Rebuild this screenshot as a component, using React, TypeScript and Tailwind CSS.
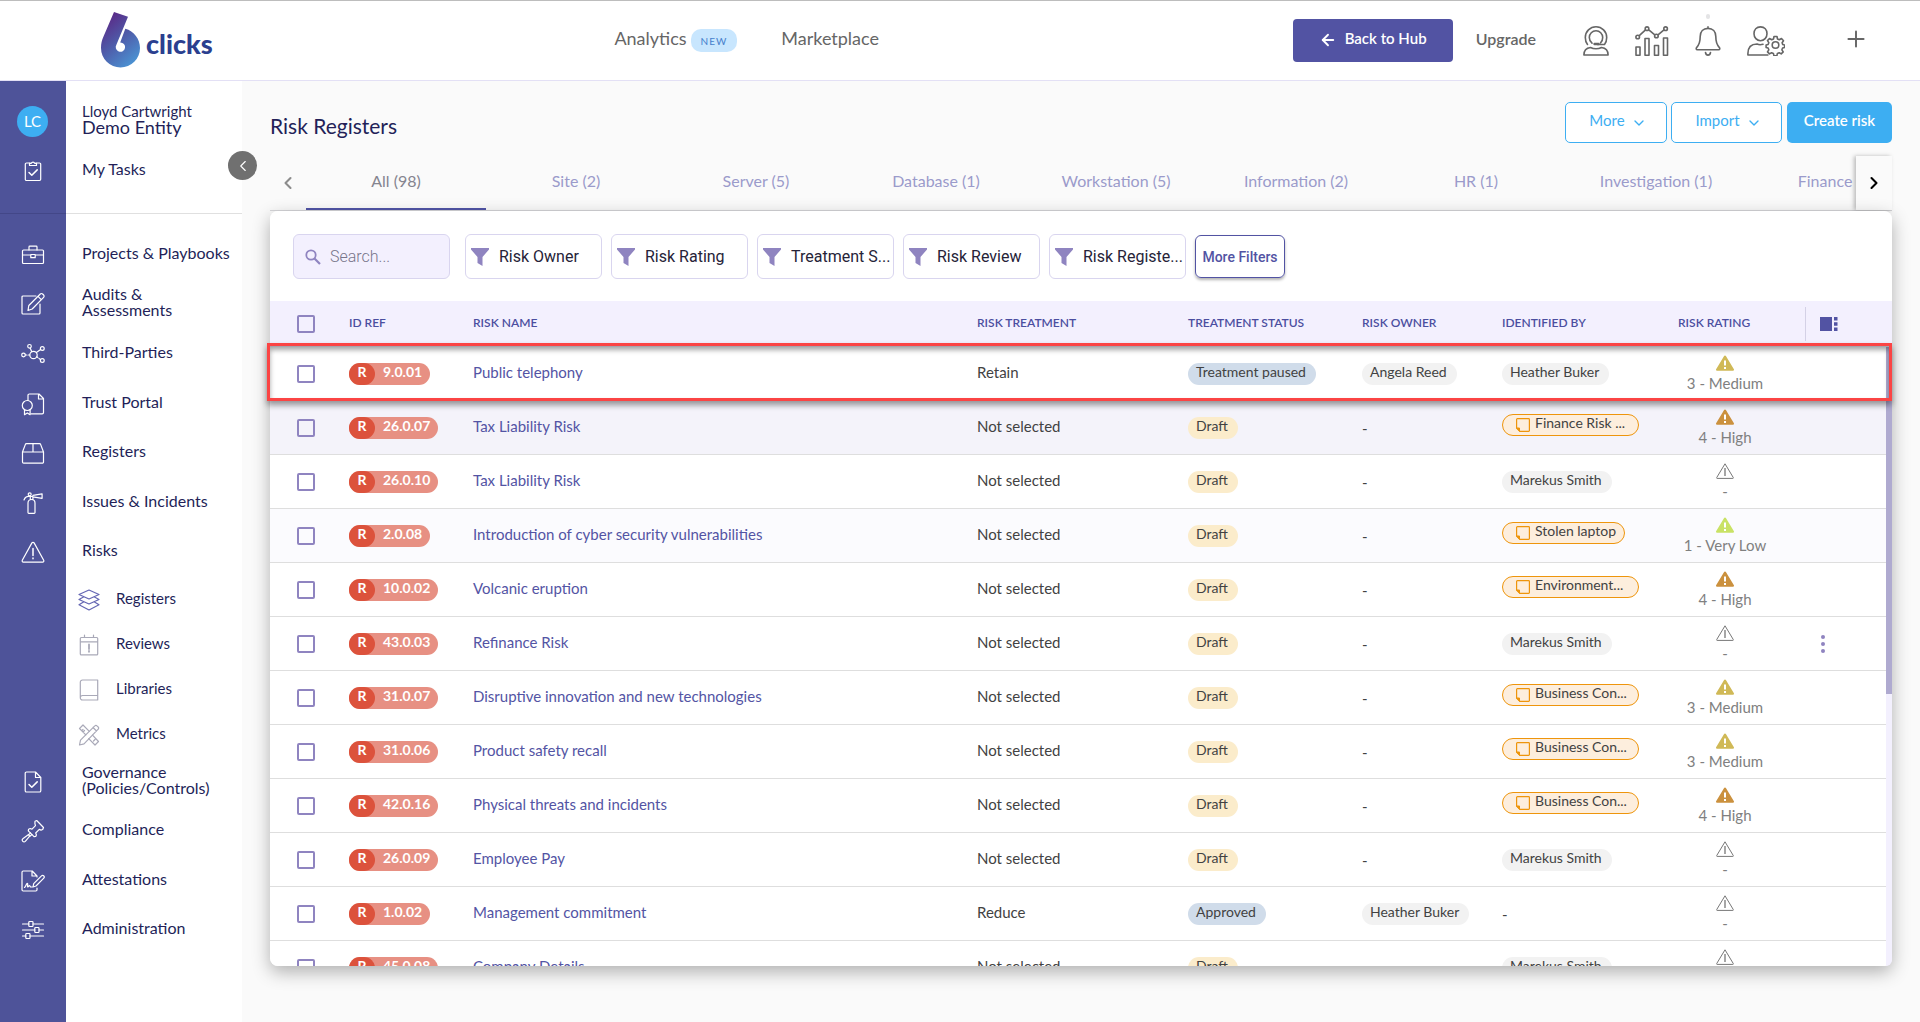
import React, { useState } from 'react';
import { ArrowLeft, ChevronDown, ChevronLeft, ChevronRight, Plus } from 'lucide-react';

type Rating = 'medium' | 'high' | 'low' | 'none';

interface Risk {
  id: string;
  name: string;
  treatment: string;
  status: string;
  owner?: string;
  identifiedBy?: string;
  linked?: boolean;
  rating: Rating;
  rowClass?: string;
  menu?: boolean;
}

const risks: Risk[] = [
  { id: '9.0.01', name: 'Public telephony', treatment: 'Retain', status: 'Treatment paused', owner: 'Angela Reed', identifiedBy: 'Heather Buker', rating: 'medium' },
  { id: '26.0.07', name: 'Tax Liability Risk', treatment: 'Not selected', status: 'Draft', identifiedBy: 'Finance Risk ...', linked: true, rating: 'high', rowClass: 'bg-[#f4f3fa]' },
  { id: '26.0.10', name: 'Tax Liability Risk', treatment: 'Not selected', status: 'Draft', identifiedBy: 'Marekus Smith', rating: 'none' },
  { id: '2.0.08', name: 'Introduction of cyber security vulnerabilities', treatment: 'Not selected', status: 'Draft', identifiedBy: 'Stolen laptop', linked: true, rating: 'low', rowClass: 'bg-[#fbfbfe]' },
  { id: '10.0.02', name: 'Volcanic eruption', treatment: 'Not selected', status: 'Draft', identifiedBy: 'Environment...', linked: true, rating: 'high' },
  { id: '43.0.03', name: 'Refinance Risk', treatment: 'Not selected', status: 'Draft', identifiedBy: 'Marekus Smith', rating: 'none', menu: true },
  { id: '31.0.07', name: 'Disruptive innovation and new technologies', treatment: 'Not selected', status: 'Draft', identifiedBy: 'Business Con...', linked: true, rating: 'medium' },
  { id: '31.0.06', name: 'Product safety recall', treatment: 'Not selected', status: 'Draft', identifiedBy: 'Business Con...', linked: true, rating: 'medium' },
  { id: '42.0.16', name: 'Physical threats and incidents', treatment: 'Not selected', status: 'Draft', identifiedBy: 'Business Con...', linked: true, rating: 'high' },
  { id: '26.0.09', name: 'Employee Pay', treatment: 'Not selected', status: 'Draft', identifiedBy: 'Marekus Smith', rating: 'none' },
  { id: '1.0.02', name: 'Management commitment', treatment: 'Reduce', status: 'Approved', owner: 'Heather Buker', rating: 'none' },
  { id: '45.0.08', name: 'Company Details', treatment: 'Not selected', status: 'Draft', identifiedBy: 'Marekus Smith', rating: 'none' }
];

const tabs = ['All (98)', 'Site (2)', 'Server (5)', 'Database (1)', 'Workstation (5)', 'Information (2)', 'HR (1)', 'Investigation (1)', 'Finance (3)'];

const filters = ['Risk Owner', 'Risk Rating', 'Treatment S...', 'Risk Review', 'Risk Registe...'];

const ratings: Record<Rating, { label: string; color: string }> = {
  medium: { label: '3 - Medium', color: 'text-[#d0b957]' },
  high: { label: '4 - High', color: 'text-[#cb913e]' },
  low: { label: '1 - Very Low', color: 'text-[#c9e265]' },
  none: { label: '-', color: 'text-[#777777]' }
};

/* ---------- Icons ---------- */

function LineIcon({ children, className = 'h-6 w-6' }: { children: React.ReactNode; className?: string }) {
  return (
    <svg viewBox="0 0 24 24" fill="none" stroke="currentColor" strokeWidth="1.2" strokeLinejoin="round" strokeLinecap="round" className={className} aria-hidden="true">
      {children}
    </svg>
  );
}

const TasksIcon = () => (
  <LineIcon>
    <path d="M9 4H5.500a1.200 1.200 0 0 0-1.200 1.200v15.100a1.200 1.200 0 0 0 1.200 1.200h13a1.200 1.200 0 0 0 1.200-1.200V5.200A1.200 1.200 0 0 0 18.500 4H15" />
    <path d="M8.500 6.500V4.300h1.800a1.800 1.800 0 0 1 3.400 0h1.800v2.200z" />
    <path d="M8 13.500l2.800 2.800 5.400-5.400" strokeWidth="1.500" />
  </LineIcon>
);

const BriefcaseIcon = () => (
  <LineIcon>
    <rect x="1.500" y="7" width="21" height="13.500" rx="1" />
    <path d="M8 7V4a.800.800 0 0 1 .800-.800h6.400A.800.800 0 0 1 16 4v3M1.500 12h8.300M14.200 12h8.300M9.800 11.500h4.400v3.200H9.800z" />
  </LineIcon>
);

const EditIcon = () => (
  <LineIcon>
    <path d="M15 4H2a1 1 0 0 0-1 1v16a1 1 0 0 0 1 1h16a1 1 0 0 0 1-1v-9" />
    <path d="M7 18.500l.800-5L19.300 2a1.600 1.600 0 0 1 2.300 0l1 1a1.600 1.600 0 0 1 0 2.300L11.200 17z M17 4.300L20.300 7.600" />
  </LineIcon>
);

const NetworkIcon = () => (
  <LineIcon>
    <circle cx="12.500" cy="13" r="3.700" />
    <circle cx="2.500" cy="13" r="1.800" />
    <circle cx="8.500" cy="4.300" r="1.800" />
    <circle cx="21.300" cy="6.500" r="1.900" />
    <circle cx="21.300" cy="18.500" r="1.900" />
    <path d="M4.300 13h1.600M7.300 13h1.500M9.200 6l1.500 3.700M19.600 7.600l-4.200 3M15.800 14.800l1 .700M18 16.400l1.500 1" />
  </LineIcon>
);

const CertificateIcon = () => (
  <LineIcon>
    <path d="M7 8.500V3.300a1.300 1.300 0 0 1 1.300-1.300H18l4.500 4.500v14a1.300 1.300 0 0 1-1.300 1.300H10M17.500 2v5h5" />
    <circle cx="6.300" cy="13.500" r="5" />
    <path d="M3.500 17.700v5l2.800-1.800 2.800 1.800v-5" />
  </LineIcon>
);

const BoxIcon = () => (
  <LineIcon>
    <path d="M1.500 11L4.300 3.600a1.300 1.300 0 0 1 1.200-.900h13a1.300 1.300 0 0 1 1.200.900L22.500 11v10a1.200 1.200 0 0 1-1.200 1.200H2.700A1.200 1.200 0 0 1 1.500 21zM1.500 11h21M12 2.700V11" />
  </LineIcon>
);

const ExtinguisherIcon = () => (
  <LineIcon>
    <path d="M7 21.500V12a3.500 3.500 0 0 1 7 0v9.500a.800.800 0 0 1-.800.800H7.800a.800.800 0 0 1-.800-.800zM9.300 8.500V5.500h2.600v3M3 9c.800-2.500 3-3.800 6.300-3.800M11.900 4.300l9.200-1.500v4.500l-9.200-1.500" />
    <circle cx="8.700" cy="3.300" r="1.500" />
  </LineIcon>
);

const RisksIcon = () => (
  <LineIcon>
    <path d="M12 2.300a1.300 1.300 0 0 0-1.100.600L1.300 20.300a1.200 1.200 0 0 0 1 1.800h19.400a1.200 1.200 0 0 0 1-1.800L13.100 2.900a1.300 1.300 0 0 0-1.100-.600z" />
    <path d="M12 8.500v7M12 18v.800" strokeWidth="1.500" />
  </LineIcon>
);

const PolicyIcon = () => (
  <LineIcon>
    <path d="M14.500 2H5.500a1.300 1.300 0 0 0-1.300 1.300v17.400A1.300 1.300 0 0 0 5.500 22h13a1.300 1.300 0 0 0 1.300-1.300V7.500zM14.500 2v5.500h5.300" />
    <path d="M8 14.500l2.800 2.800 5.400-5.400" strokeWidth="1.500" />
  </LineIcon>
);

const GavelIcon = () => (
  <LineIcon>
    <path d="M14 2.200l1.700-.700 6.800 7-.800 2-1.700.600-1.700-.700-3.600 3.600.700 1.900-.700 1.600-1.700.200-5.700-5.800.300-1.700 1.600-.700 1.800.700 3.500-3.500-.600-2z" />
    <path d="M9.500 14l-2 1.900 1.400 1.500 2-1.900M7.600 15.500l-5.800 4.300a1.700 1.700 0 0 0 2.500 2.500l4.600-5.400" />
  </LineIcon>
);

const AttestationIcon = () => (
  <LineIcon>
    <path d="M16 8V7l-4.800-5H2.200A1.200 1.200 0 0 0 1 3.200v17.600A1.200 1.200 0 0 0 2.200 22h12.600a1.200 1.200 0 0 0 1.200-1.200V19M11 2v5h5" />
    <path d="M12 18l.700-3.300 7.800-7.900a1.500 1.500 0 0 1 2.100 0l.200.200a1.500 1.500 0 0 1 0 2.100L15 17zM3.500 18.500c1.200-.500 2-4.500 3-4 .800.500-.600 3.500.300 3.500s1-1.500 1.700-1.500.500 1.500 1.500 1.500H12" />
  </LineIcon>
);

const SlidersIcon = () => (
  <LineIcon>
    <path d="M1.500 6h6.300M12 6h10.500M1.500 12h12.300M18 12h4.500M1.500 18h3.300M9 18h13.500" />
    <rect x="7.800" y="3.500" width="4.200" height="5" rx=".800" />
    <rect x="13.800" y="9.500" width="4.200" height="5" rx=".800" />
    <rect x="4.800" y="15.500" width="4.200" height="5" rx=".800" />
  </LineIcon>
);

const LayersIcon = () => (
  <LineIcon className="h-6 w-6 text-[#6466b3]">
    <path d="M12 2l10 4.500L12 11 2 6.500zM6.500 9L2 11.500 12 16l10-4.500L17.500 9M6.500 14L2 16.800 12 22l10-5.200L17.500 14" />
  </LineIcon>
);

const ReviewsIcon = () => (
  <LineIcon className="h-6 w-6 text-[#a9a9b8]">
    <path d="M4.300 4.500h15.400a1 1 0 0 1 1 1v15.400a1 1 0 0 1-1 1H4.300a1 1 0 0 1-1-1V5.500a1 1 0 0 1 1-1zM3.300 8.800h17.400M7.500 2v2.500M16.500 2v2.500" />
    <path d="M12 11.500v4.500M12 18v.800" strokeWidth="1.800" />
  </LineIcon>
);

const LibrariesIcon = () => (
  <LineIcon className="h-6 w-6 text-[#a9a9b8]">
    <path d="M20.700 17.500V2H5.500a2.200 2.200 0 0 0-2.200 2.200v15.500a2.200 2.200 0 0 1 2.200-2.200h15.200v4.500H5.500a2.200 2.200 0 0 1-2.200-2.300" />
  </LineIcon>
);

const MetricsIcon = () => (
  <LineIcon className="h-6 w-6 text-[#a9a9b8]">
    <path d="M2.500 22l1-4.800L17.800 2.800a1.500 1.500 0 0 1 2.200 0L21.200 4a1.500 1.500 0 0 1 0 2.200L7 20.800zM16 4.500L19.500 8" />
    <path d="M8.800 11.800L2.500 5.500l3.500-3.500 6.300 6.300M15.500 12.200l6 6.300-3.500 3.500-6.300-6.300M6 9l1.500-1.500M16.500 18l1.500-1.500M5 7.500l1-1" />
  </LineIcon>
);

const SupportIcon = () => (
  <svg width="26" height="30" viewBox="0 0 26 30" fill="none" stroke="currentColor" strokeWidth="1.600" strokeLinecap="round" strokeLinejoin="round" aria-hidden="true">
    <path d="M4.500 18.500C2.800 16.500 2.300 14 2.300 11.500a10.700 10.700 0 0 1 21.400 0c0 2.500-.500 5-2.200 7H14.500" />
    <path d="M9 17.200C7 15.500 6.300 13.500 6.300 11.500a6.700 6.700 0 0 1 13.400 0c0 2-.700 4-2.200 5.500" />
    <path d="M11.500 18h4" strokeWidth="2.400" />
    <path d="M.900 29c0-4.500 2.300-7 6.600-7.500 3 1.500 8 1.500 11 0 4.300.500 6.600 3 6.600 7.500z" />
  </svg>
);

const ChartIcon = () => (
  <svg width="34" height="30" viewBox="0 0 34 30" fill="none" stroke="currentColor" strokeWidth="1.600" strokeLinejoin="round" aria-hidden="true">
    <path d="M1 21h4v8.200H1zM10 12.500h4v16.700h-4zM19.500 19.500h4v9.700h-4zM28.500 12h4v17.200h-4z" />
    <path d="M4 9.800l6.500-6M13.800 3.800l6 5M23 8.800l6-5" />
    <circle cx="2.700" cy="11" r="1.800" />
    <circle cx="12" cy="2.700" r="1.800" />
    <circle cx="21.400" cy="10" r="1.800" />
    <circle cx="30.600" cy="2.700" r="1.800" />
  </svg>
);

const BellIcon = () => (
  <svg width="26" height="30" viewBox="0 0 26 30" fill="none" stroke="currentColor" strokeWidth="1.600" strokeLinecap="round" strokeLinejoin="round" aria-hidden="true">
    <path d="M13 .900v1.500M13 2.400c4.800 0 7.800 3.300 7.800 8.200 0 6.400 1.200 8.600 3.600 11 .700.800.500 2.200-.800 2.200H2.400c-1.300 0-1.500-1.400-.800-2.200 2.400-2.400 3.600-4.600 3.600-11 0-4.900 3-8.200 7.800-8.200zM10.500 26.500c.300 1.700 1.200 2.600 2.500 2.600s2.200-.900 2.500-2.600" />
  </svg>
);

const UserGearIcon = () => (
  <svg width="38" height="30" viewBox="0 0 38 30" fill="none" stroke="currentColor" strokeWidth="1.600" strokeLinecap="round" strokeLinejoin="round" aria-hidden="true">
    <path d="M13.500.900c4 0 6.500 3 6.500 6.800s-2.800 7-6.500 7S7 11.500 7 7.700 9.500.900 13.500.900z" />
    <path d="M16 18.300c-1.500.400-4.500.400-6-.3C4.500 18 1 21 .900 27.500V29h20" />
    <circle cx="28.500" cy="19" r="3.300" />
    <path d="M27 10.500h3l.500 2.500 1.800.800 2.200-1.300 2 2.200-1.400 2 .700 1.900 1.800.5v2.300l-2 .600-.700 1.800 1.300 2.100-2 2-2-1.200-1.800.700-.500 2.300h-3l-.5-2.300-1.800-.700-2.100 1.200-2-2 1.300-2.100-.700-1.800-2-.6v-2.400l2-.5.700-1.800-1.300-2.100 2-2.100 2.200 1.300 1.800-.8z" />
  </svg>
);

const SearchIcon = () => (
  <svg width="18" height="18" viewBox="0 0 18 18" fill="none" stroke="currentColor" className="shrink-0" aria-hidden="true">
    <circle cx="7" cy="7" r="4.700" strokeWidth="1.800" />
    <path d="M10.500 10.500l5.500 5.500" strokeWidth="2.200" />
  </svg>
);

const FunnelIcon = () => (
  <svg width="18" height="18" viewBox="0 0 18 18" className="shrink-0 text-[#8f84c0]" fill="currentColor" aria-hidden="true">
    <path d="M0 0h18v1.500L11.500 9v9l-5-3V9L0 1.500z" />
  </svg>
);

const ColumnsIcon = () => (
  <svg width="18" height="14" viewBox="0 0 18 14" fill="currentColor" aria-hidden="true">
    <path d="M0 0h12v14H0zM14 0h3.500v3.500H14zM14 5.200h3.500v3.500H14zM14 10.500h3.500V14H14z" />
  </svg>
);

const NoteIcon = () => (
  <svg width="14" height="14" viewBox="0 0 14 14" fill="none" stroke="#ee950c" className="shrink-0" aria-hidden="true">
    <path d="M.600 10V1.400a.800.800 0 0 1 .800-.800h11.200a.800.800 0 0 1 .800.800v11.200a.800.800 0 0 1-.800.800H4z" strokeWidth="1.200" />
    <path d="M.600 10H3.500v3.400z" fill="#ee950c" />
  </svg>
);

function RatingIcon({ rating }: { rating: Rating }) {
  if (rating === 'none') {
    return (
      <svg width="18" height="16" viewBox="0 0 18 16" fill="none" stroke="currentColor" className={ratings.none.color} aria-hidden="true">
        <path d="M9 .800L17.300 14.600a.500.500 0 0 1-.400.800H1.100a.500.500 0 0 1-.400-.800z" strokeLinejoin="round" />
        <path d="M9 5v8" strokeWidth="1.300" />
      </svg>
    );
  }
  return (
    <svg width="18" height="16" viewBox="0 0 18 16" fill="currentColor" className={ratings[rating].color} aria-hidden="true">
      <path d="M9 .500a1 1 0 0 1 .900.500l8 13.300a1 1 0 0 1-.900 1.500H1a1 1 0 0 1-.9-1.500L8.100 1A1 1 0 0 1 9 .500z" />
      <path d="M9 5.500v5M9 12v2" stroke="#fff" strokeWidth="2" />
    </svg>
  );
}

function Logo() {
  return (
    <a href="#" className="flex items-center gap-1.5 pb-0.5 text-[#2b3f8f]">
      <svg width="39" height="56" viewBox="0 0 39 56" aria-hidden="true">
        <defs>
          <linearGradient id="six" x1="0.200" y1="0" x2="0.800" y2="1">
            <stop offset="0" stopColor="#5c2483" />
            <stop offset="0.450" stopColor="#4f57a6" />
            <stop offset="1" stopColor="#4a97d6" />
          </linearGradient>
        </defs>
        <path fill="url(#six)" d="M13 0L27 4.700L15.500 32.500A4.700 4.700 0 1 0 19.200 30.400L24.300 16.700C33 19 39 27 39 36A19.500 19.500 0 0 1 0 36C0 31 .8 28.500 2.500 24.500Z" />
      </svg>
      <span className="mt-2 text-[27px] leading-7 font-black">clicks</span>
    </a>
  );
}

/* ---------- Sections ---------- */

const upperMenu = [
  { label: 'Projects & Playbooks', icon: <BriefcaseIcon /> },
  { label: 'Audits & Assessments', icon: <EditIcon /> },
  { label: 'Third-Parties', icon: <NetworkIcon /> },
  { label: 'Trust Portal', icon: <CertificateIcon /> },
  { label: 'Registers', icon: <BoxIcon /> },
  { label: 'Issues & Incidents', icon: <ExtinguisherIcon /> },
  { label: 'Risks', icon: <RisksIcon /> }
];

const riskMenu = [
  { label: 'Registers', icon: <LayersIcon /> },
  { label: 'Reviews', icon: <ReviewsIcon /> },
  { label: 'Libraries', icon: <LibrariesIcon /> },
  { label: 'Metrics', icon: <MetricsIcon /> }
];

const lowerMenu = [
  { label: 'Governance (Policies/Controls)', icon: <PolicyIcon /> },
  { label: 'Compliance', icon: <GavelIcon /> },
  { label: 'Attestations', icon: <AttestationIcon /> },
  { label: 'Administration', icon: <SlidersIcon /> }
];

function Header() {
  return (
    <header className="flex h-[81px] shrink-0 items-center border-t border-b border-t-[#bdbdbd] border-b-[#e3e0f5] bg-white text-[#666666]">
      <div className="w-[32%] pl-[101px]">
        <Logo />
      </div>
      <nav className="flex items-center gap-11 pb-1.5 text-lg leading-6">
        <a href="#" className="flex items-center gap-1">
          Analytics
          <span className="mt-1.5 flex h-[23px] items-center rounded-[10px] bg-[#c8e6fe] px-[10px] text-[10px] tracking-widest text-[#4680cc]">NEW</span>
        </a>
        <a href="#">Marketplace</a>
      </nav>
      <div className="ml-auto flex items-center pr-[51px]">
        <button className="flex h-[43px] w-40 items-center justify-center gap-2 rounded bg-[#5253a3] pb-1 font-semibold text-white">
          <ArrowLeft className="mt-0.5 h-[18px] w-[18px]" strokeWidth={2.5} />
          <span className="text-[15px]">Back to Hub</span>
        </button>
        <a href="#" className="ml-[23px] pb-1 text-base font-semibold">Upgrade</a>
        <div className="ml-[47px] flex items-center gap-[26px]">
          <button aria-label="Support"><SupportIcon /></button>
          <button aria-label="Reports"><ChartIcon /></button>
          <button aria-label="Notifications" className="relative">
            <span className="absolute -top-3 left-[11px] h-[5px] w-1 rounded-full bg-[#e4e4e6]" />
            <BellIcon />
          </button>
          <button aria-label="User settings"><UserGearIcon /></button>
        </div>
        <button aria-label="Add" className="ml-[58px] pb-1"><Plus className="h-[26px] w-[26px]" strokeWidth={1.8} /></button>
      </div>
    </header>
  );
}

function Sidebar() {
  return (
    <aside className="relative flex w-[242px] shrink-0">
      <div className="w-[66px] bg-[#4e5399] text-white">
        <div className="flex h-[133px] flex-col items-center gap-[22px] border-b border-[#434788] pt-[25px] pr-px">
          <span className="flex h-[31px] w-[31px] items-center justify-center rounded-full bg-[#3daef2] text-[15px]">LC</span>
          <a href="#" aria-label="Tasks"><TasksIcon /></a>
        </div>
        <div className="flex h-[363px] flex-col pt-4 pr-px">
          {upperMenu.map((item) => (
            <a key={item.label} href="#" aria-label={item.label} className="flex flex-1 items-center justify-center">{item.icon}</a>
          ))}
        </div>
        <div className="mt-[180px] flex h-[198px] flex-col pr-px">
          {lowerMenu.map((item) => (
            <a key={item.label} href="#" aria-label={item.label} className="flex flex-1 items-center justify-center">{item.icon}</a>
          ))}
        </div>
      </div>

      <nav className="flex-1 bg-white text-base leading-4 text-[#231f58]">
        <div className="h-[133px] border-b border-[#e0e0e0] pt-[22px] pl-4">
          <p className="text-[15px] leading-4">Lloyd Cartwright</p>
          <p className="text-lg leading-4">Demo Entity</p>
          <a href="#" className="mt-[26px] block">My Tasks</a>
        </div>
        <div className="flex h-[363px] flex-col pt-4">
          {upperMenu.map((item) => (
            <a key={item.label} href="#" className="flex flex-1 items-center pb-1 pl-4">
              <span className={item.label.startsWith('Audits') ? 'w-[100px]' : ''}>{item.label}</span>
            </a>
          ))}
        </div>
        {riskMenu.map((item) => (
          <a key={item.label} href="#" className="flex h-[45px] items-center gap-[15px] pl-[11px] text-[15px] leading-4">
            {item.icon}
            <span className="pb-1">{item.label}</span>
          </a>
        ))}
        <div className="flex h-[198px] flex-col">
          {lowerMenu.map((item) => (
            <a key={item.label} href="#" className="flex flex-1 items-center pr-7 pb-1 pl-4">{item.label}</a>
          ))}
        </div>
      </nav>

      <button aria-label="Collapse menu" className="absolute top-[70px] -right-[15px] z-10 flex h-[29px] w-[29px] items-center justify-center rounded-full bg-[#707070] text-white">
        <ChevronLeft className="h-[18px] w-[18px]" strokeWidth={1.5} />
      </button>
    </aside>
  );
}

function Chip({ children, className }: { children: React.ReactNode; className: string }) {
  return <span className={`flex h-[22px] w-fit items-center rounded-full pr-[10px] pb-1 pl-2 text-sm leading-4 text-[#424242] ${className}`}>{children}</span>;
}

function Checkbox({ label }: { label: string }) {
  return <input type="checkbox" aria-label={label} className="block h-[18px] w-[18px] appearance-none rounded-xs border-2 border-[#8f84c0] checked:bg-[#8f84c0]" />;
}

function RiskRow({ risk }: { risk: Risk }) {
  return (
    <tr className={`h-[54px] [&>td]:border-b [&>td]:border-[#dedede] ${risk.rowClass ?? ''}`}>
      <td className="pl-[27px]"><Checkbox label={`Select ${risk.name}`} /></td>
      <td>
        <span className="flex w-fit items-center rounded-full bg-[#e79083] pr-2 text-sm leading-4 font-bold text-white">
          <span className="flex h-[22px] w-[26px] items-center justify-center rounded-full bg-[#dc523c] pb-1">R</span>
          <span className="pb-1 pl-2">{risk.id}</span>
        </span>
      </td>
      <td className="pb-1"><a href="#" className="text-[#5354a4]">{risk.name}</a></td>
      <td className="pb-1">{risk.treatment}</td>
      <td><Chip className={risk.status === 'Draft' ? 'bg-[#fbeccb]' : 'bg-[#d0dcea]'}>{risk.status}</Chip></td>
      <td>{risk.owner ? <Chip className="bg-[#f2f2f2]">{risk.owner}</Chip> : '-'}</td>
      <td>
        {!risk.identifiedBy && '-'}
        {risk.identifiedBy && !risk.linked && <Chip className="bg-[#f2f2f2]">{risk.identifiedBy}</Chip>}
        {risk.linked && (
          <span
            className={`mb-1.5 flex h-[22px] items-center gap-[5px] rounded-full border border-[#ee950c] bg-[#fdeedd] pr-2 pl-[13px] text-sm leading-4 ${
              risk.identifiedBy?.endsWith('...') ? 'w-[137px]' : 'w-fit'
            }`}
          >
            <NoteIcon />
            <span className="pb-1">{risk.identifiedBy}</span>
          </span>
        )}
      </td>
      <td>
        <span className="flex w-[94px] flex-col items-center pt-[3px] text-[#808080]">
          <RatingIcon rating={risk.rating} />
          <span className="leading-6">{ratings[risk.rating].label}</span>
        </span>
      </td>
      <td className="pl-4">
        {risk.menu && (
          <button aria-label="Row actions" className="flex flex-col gap-[3px]">
            <span className="h-1 w-1 rounded-full bg-[#8f84c0]" />
            <span className="h-1 w-1 rounded-full bg-[#8f84c0]" />
            <span className="h-1 w-1 rounded-full bg-[#8f84c0]" />
          </button>
        )}
      </td>
    </tr>
  );
}

function RiskTable() {
  return (
    <table className="w-full table-fixed border-separate border-spacing-0 text-[15px] leading-5 text-[#424242]">
      <colgroup>
        <col className="w-[79px]" />
        <col className="w-[124px]" />
        <col />
        <col className="w-[211px]" />
        <col className="w-[174px]" />
        <col className="w-[140px]" />
        <col className="w-[176px]" />
        <col className="w-[127px]" />
        <col className="w-[87px]" />
      </colgroup>
      <thead>
        <tr className="h-[46px] bg-[#f3f0fe] text-left text-xs text-[#4b4ea0] uppercase [&>th]:font-semibold">
          <th className="pl-[27px]"><Checkbox label="Select all" /></th>
          <th className="pb-0.5">ID Ref</th>
          <th className="pb-0.5">Risk Name</th>
          <th className="pb-0.5">Risk Treatment</th>
          <th className="pb-0.5">Treatment Status</th>
          <th className="pb-0.5">Risk Owner</th>
          <th className="pb-0.5">Identified By</th>
          <th className="pb-0.5">Risk Rating</th>
          <th>
            <button aria-label="Choose columns" className="flex h-[34px] items-center border-l border-[#d4d1e6] pl-[14px] text-[#5253a3]">
              <ColumnsIcon />
            </button>
          </th>
        </tr>
      </thead>
      <tbody>
        {risks.map((risk) => (
          <RiskRow key={risk.id} risk={risk} />
        ))}
      </tbody>
    </table>
  );
}

export default function App() {
  const [activeTab, setActiveTab] = useState('All (98)');

  return (
    <div className="flex h-screen flex-col overflow-hidden bg-[#fafafa] font-['Lato',sans-serif]">
      <Header />
      <div className="flex min-h-0 flex-1">
        <Sidebar />

        <main className="flex min-w-0 flex-1 flex-col pr-7 pb-14 pl-7">
          {/* Title and page actions */}
          <div className="flex h-[75px] items-center justify-between pt-2">
            <h1 className="pt-1.5 text-[21px] leading-7 text-[#231f58]">Risk Registers</h1>
            <div className="flex text-[15px] text-[#3daef2]">
              <button className="flex h-[41px] w-[102px] items-center justify-center gap-1.5 rounded-[5px] border border-[#3daef2] bg-white pb-1 pl-1">
                More <ChevronDown className="mt-1 h-4 w-4" />
              </button>
              <button className="ml-1 flex h-[41px] w-[111px] items-center justify-center gap-1.5 rounded-[5px] border border-[#3daef2] bg-white pb-1 pl-1">
                Import <ChevronDown className="mt-1 h-4 w-4" />
              </button>
              <button className="ml-[5px] h-[41px] w-[105px] rounded-[5px] bg-[#3daef2] pb-1 font-semibold text-white">Create risk</button>
            </div>
          </div>

          {/* Register tabs */}
          <div className="flex h-[55px] shrink-0 border-b border-[#d6d6d9]">
            <button aria-label="Previous tabs" className="flex w-9 items-center justify-center text-[#8c8c8c]">
              <ChevronLeft className="h-5 w-5" strokeWidth={2.5} />
            </button>
            <div role="tablist" className="flex min-w-0 flex-1 overflow-hidden text-base">
              {tabs.map((tab) => (
                <button
                  key={tab}
                  role="tab"
                  aria-selected={tab === activeTab}
                  onClick={() => setActiveTab(tab)}
                  className={`w-[180px] shrink-0 border-b-2 pb-0.5 ${
                    tab === activeTab ? 'border-[#5054a6] text-[#85848f]' : 'border-transparent text-[#9b9bcb]'
                  }`}
                >
                  {tab}
                </button>
              ))}
            </div>
            <button aria-label="Next tabs" className="flex w-9 items-center justify-center bg-[#fafafa] text-black shadow-[-2px_0_4px_rgba(0,0,0,0.25)]">
              <ChevronRight className="h-5 w-5" strokeWidth={2.5} />
            </button>
          </div>

          {/* Register card */}
          <div className="relative min-h-0 flex-1 rounded-lg shadow-[0_6px_18px_rgba(0,0,0,0.3)]">
            <div className="h-full overflow-hidden rounded-lg bg-white">
              <div className="flex h-[90px] items-center pt-px pl-[23px] font-['Roboto',sans-serif] text-base">
                <label className="mr-[15px] flex h-[45px] w-[157px] items-center gap-2 rounded-md border border-[#d9d5ef] bg-[#f3f0fe] px-[10px] text-[#8f84c0]">
                  <SearchIcon />
                  <input type="search" aria-label="Search risks" placeholder="Search..." className="w-full min-w-0 bg-transparent font-light outline-none placeholder:text-[#77758a]" />
                </label>
                {filters.map((filter) => (
                  <button key={filter} className="mr-[9px] flex h-[45px] w-[137px] items-center gap-[10px] rounded-md border border-[#d9d5ef] pl-[5px] text-left whitespace-nowrap text-[#262338]">
                    <FunnelIcon />
                    {filter}
                  </button>
                ))}
                <button className="h-[43px] w-[90px] rounded-md border border-[#5253a3] text-sm font-medium text-[#5253a3] shadow-[0_2px_3px_rgba(0,0,0,0.3)]">More Filters</button>
              </div>
              <RiskTable />
            </div>

            {/* Scroll position */}
            <div className="absolute top-[136px] right-0 bottom-0 w-1.5 overflow-hidden rounded-br-lg bg-[#f3f0fe]">
              <div className="h-[56%] bg-[#afaad0]" />
            </div>

            {/* Highlighted risk */}
            <div className="pointer-events-none absolute top-[132px] right-0 -left-[3px] h-[58px] border-[3px] border-[#fb4444] shadow-[0_4px_6px_rgba(0,0,0,0.4),inset_0_4px_5px_rgba(0,0,0,0.35)]" />
          </div>
        </main>
      </div>
    </div>
  );
}
